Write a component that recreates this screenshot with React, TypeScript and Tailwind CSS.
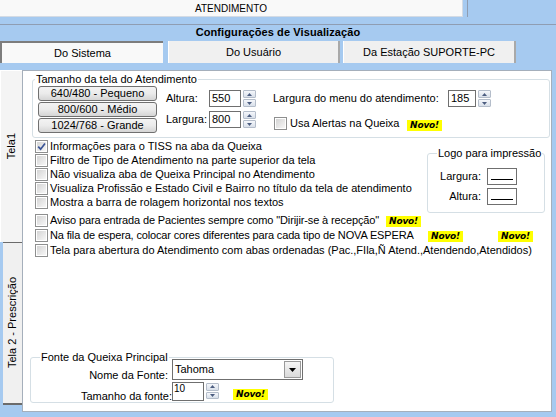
import React from 'react';

const Check: React.FC<{ checked?: boolean }> = ({ checked }) => (
  <span className="relative flex h-[13px] w-[13px] shrink-0 items-center justify-center border border-[#8e8f8f] bg-white">
    <span className="h-[9px] w-[9px] bg-linear-to-br from-[#d4d4d4] to-[#f7f7f7]" />
    {checked && (
      <svg className="absolute left-[1px] top-[1px]" width="9" height="9" viewBox="0 0 9 9">
        <path d="M1.2 4.6 L3.6 7.2 L8 1.4" fill="none" stroke="#3a5496" strokeWidth="1.7" />
      </svg>
    )}
  </span>
);

const Spin: React.FC<{ className?: string }> = ({ className = 'h-[17px]' }) => (
  <span className={`flex w-[13px] shrink-0 flex-col gap-[1px] ${className}`}>
    <span className="flex flex-1 items-center justify-center rounded-[1px] border border-[#b4bdca] bg-linear-to-b from-[#f5f7fb] to-[#d9e0ea]">
      <svg width="5" height="3" viewBox="0 0 5 3"><path d="M0 3 L2.5 0 L5 3Z" fill="#4c5d80" /></svg>
    </span>
    <span className="flex flex-1 items-center justify-center rounded-[1px] border border-[#b4bdca] bg-linear-to-b from-[#f5f7fb] to-[#d9e0ea]">
      <svg width="5" height="3" viewBox="0 0 5 3"><path d="M0 0 L5 0 L2.5 3Z" fill="#4c5d80" /></svg>
    </span>
  </span>
);

const Novo: React.FC<{ className?: string }> = ({ className = '' }) => (
  <span className={`flex h-[11px] w-[35px] shrink-0 items-center justify-center bg-[#ffff00] font-['DejaVu_Sans',sans-serif] text-[9px] font-bold italic leading-none tracking-[-0.2px] ${className}`}>
    Novo!
  </span>
);

const Btn: React.FC<{ children: React.ReactNode }> = ({ children }) => (
  <div className="flex h-[15px] items-center justify-center rounded-[3px] border border-[#707070] bg-linear-to-b from-[#f3f3f3] via-[#ebebeb] to-[#d5d5d5] leading-none">
    {children}
  </div>
);

const Opt: React.FC<{ label: string; checked?: boolean; h?: string; textClass?: string; children?: React.ReactNode }> = ({
  label,
  checked,
  h = 'h-[14px]',
  textClass = '',
  children,
}) => (
  <div className={`flex items-center ${h}`}>
    <Check checked={checked} />
    <span className={`ml-[2px] shrink-0 whitespace-nowrap ${textClass}`}>{label}</span>
    {children}
  </div>
);

export default function App() {
  return (
    <div className="flex h-[417px] w-[556px] flex-col overflow-hidden bg-[#a6caf0] font-['Liberation_Sans',Arial,sans-serif] text-[11px] leading-[13px] text-black">
      {/* barra superior */}
      <div className="flex h-[17px] shrink-0">
        <div className="flex w-[463px] items-center justify-center border-r border-b border-[#d4dbe4] bg-[#f9f9f9] text-[10px]">
          ATENDIMENTO
        </div>
        <div className="ml-[4px] w-[1px] bg-[#8f9db2]" />
      </div>
      <div className="h-[8px] shrink-0 border-b border-[#8f9db2]" />
      <div className="flex h-[15px] shrink-0 items-center justify-center font-bold tracking-[0.1px]">Configurações de Visualização</div>

      {/* abas */}
      <div className="mt-[1px] flex h-[22px] shrink-0">
        <div className="flex w-[163px] items-center justify-center border-t-2 border-l-2 border-[#7d7d7d] bg-[#f9f9f9]">Do Sistema</div>
        <div className="ml-[5px] flex w-[172px] items-center justify-center border-l border-r-2 border-l-white border-r-[#a9a9a9] bg-[#f0f0f0]">
          Do Usuário
        </div>
        <div className="ml-[3px] flex w-[173px] items-center justify-center border-l border-r-2 border-l-white border-r-[#a9a9a9] bg-[#f0f0f0]">
          Da Estação SUPORTE-PC
        </div>
      </div>

      <div className="mt-[7px] flex h-[342px] shrink-0">
        {/* abas verticais */}
        <div className="flex w-[22px] shrink-0 flex-col">
          <div className="flex h-[172px] items-start justify-center border-l border-t border-white bg-[#f4f4f4] pt-[62px]">
            <span className="rotate-180 whitespace-nowrap [writing-mode:vertical-rl]">Tela1</span>
          </div>
          <div className="ml-[3px] flex h-[163px] items-center justify-center border-t border-b-2 border-[#6b6b6b] bg-[#f0f0f0]">
            <span className="rotate-180 whitespace-nowrap [writing-mode:vertical-rl]">Tela 2 - Prescrição</span>
          </div>
        </div>

        {/* painel */}
        <div className="flex w-[530px] flex-col border border-[#a5afbb] bg-white">
          <fieldset className="mt-[2px] ml-[9px] mr-[1px] h-[65px] shrink-0 rounded-[3px] border border-[#d5dfe5]">
            <legend className="ml-[2px] px-[1px] leading-[13px]">Tamanho da tela do Atendimento</legend>
            <div className="flex pl-[5px]">
              <div className="flex w-[119px] flex-col gap-[1px]">
                <Btn>640/480 - Pequeno</Btn>
                <Btn>800/600 - Médio</Btn>
                <Btn>1024/768 - Grande</Btn>
              </div>
              <div className="ml-[9px] flex flex-col">
                <div className="mt-[4px] flex h-[17px] items-center">
                  <span className="w-[43px]">Altura:</span>
                  <span className="flex h-[17px] w-[32px] items-center border border-[#6f6f6f] pl-[2px]">550</span>
                  <Spin className="ml-[2px] h-[17px]" />
                </div>
                <div className="mt-[4px] flex h-[17px] items-center">
                  <span className="w-[43px]">Largura:</span>
                  <span className="flex h-[17px] w-[32px] items-center border border-[#6f6f6f] pl-[2px]">800</span>
                  <Spin className="ml-[2px] h-[17px]" />
                </div>
              </div>
              <div className="ml-[17px] flex flex-col">
                <div className="mt-[4px] flex h-[17px] items-center">
                  <span className="w-[175px]">Largura do menu do atendimento:</span>
                  <span className="flex h-[17px] w-[28px] items-center border border-[#6f6f6f] pl-[2px]">185</span>
                  <Spin className="ml-[2px] h-[17px]" />
                </div>
                <div className="mt-[10px] ml-[1px] flex h-[13px] items-center">
                  <Check />
                  <span className="ml-[3px] w-[117px]">Usa Alertas na Queixa</span>
                  <Novo className="mt-[4px]" />
                </div>
              </div>
            </div>
          </fieldset>

          <div className="mt-[1px] flex shrink-0">
            <div className="flex flex-col pl-[12px]">
              <Opt label="Informações para o TISS na aba da Queixa" checked />
              <Opt label="Filtro de Tipo de Atendimento na parte superior da tela" />
              <Opt label="Não visualiza aba de Queixa Principal no Atendimento" />
              <Opt label="Visualiza Profissão e Estado Civil e Bairro no título da tela de atendimento" />
              <Opt label="Mostra a barra de rolagem horizontal nos textos" />
            </div>
            <fieldset className="mt-[8px] mr-[6px] ml-auto h-[66px] w-[118px] shrink-0 rounded-[3px] border border-[#d5dfe5]">
              <legend className="ml-[9px] px-[1px] leading-[13px]">Logo para impressão</legend>
              <div className="mt-[8px] flex h-[17px] items-center">
                <span className="w-[53px] text-right">Largura:</span>
                <span className="ml-[6px] flex h-[17px] w-[30px] items-end justify-center border border-[#6f6f6f] pb-[4px]">
                  <span className="h-[1px] w-[22px] bg-black" />
                </span>
              </div>
              <div className="mt-[3px] flex h-[17px] items-center">
                <span className="w-[53px] text-right">Altura:</span>
                <span className="ml-[6px] flex h-[17px] w-[30px] items-end justify-center border border-[#6f6f6f] pb-[4px]">
                  <span className="h-[1px] w-[22px] bg-black" />
                </span>
              </div>
            </fieldset>
          </div>

          <div className="flex shrink-0 flex-col pl-[12px]">
            <Opt h="h-[15px]" textClass="w-[336px] tracking-[-0.12px]" label={'Aviso para entrada de Pacientes sempre como "Dirijir-se à recepção"'}>
              <Novo className="mt-[1px]" />
            </Opt>
            <Opt h="h-[15px]" textClass="w-[378px] tracking-[-0.15px]" label="Na fila de espera, colocar cores diferentes para cada tipo de NOVA ESPERA">
              <Novo className="mt-[1px]" />
              <Novo className="mt-[1px] ml-[35px]" />
            </Opt>
            <Opt h="h-[15px]" label="Tela para abertura do Atendimento com abas ordenadas (Pac.,FIla,Ñ Atend.,Atendendo,Atendidos)" />
          </div>

          <fieldset className="mt-auto mb-[8px] ml-[7px] h-[52px] w-[304px] shrink-0 rounded-[3px] border border-[#d5dfe5]">
            <legend className="ml-[9px] px-[1px] leading-[13px]">Fonte da Queixa Principal</legend>
            <div className="-mt-[5px] flex h-[21px]">
              <span className="mt-[10px] w-[141px] pr-[4px] text-right">Nome da Fonte:</span>
              <div className="flex h-[21px] w-[131px] items-center border border-[#6f6f6f] bg-white pl-[2px]">
                <span>Tahoma</span>
                <span className="mr-[1px] ml-auto flex h-[17px] w-[17px] items-center justify-center border border-[#9a9a9a] bg-linear-to-b from-[#f5f5f5] to-[#dadada]">
                  <svg width="7" height="4" viewBox="0 0 7 4"><path d="M0 0 L7 0 L3.5 4Z" fill="#000" /></svg>
                </span>
              </div>
            </div>
            <div className="mt-[2px] flex h-[19px]">
              <span className="mt-[8px] w-[141px] text-right">Tamanho da fonte:</span>
              <span className="h-[19px] w-[32px] border border-[#6f6f6f] bg-white pl-[1px] text-[10px] leading-[12px]">10</span>
              <Spin className="mt-[1px] ml-[2px] h-[16px]" />
              <Novo className="mt-[7px] ml-[14px]" />
            </div>
          </fieldset>
        </div>
      </div>
    </div>
  );
}
